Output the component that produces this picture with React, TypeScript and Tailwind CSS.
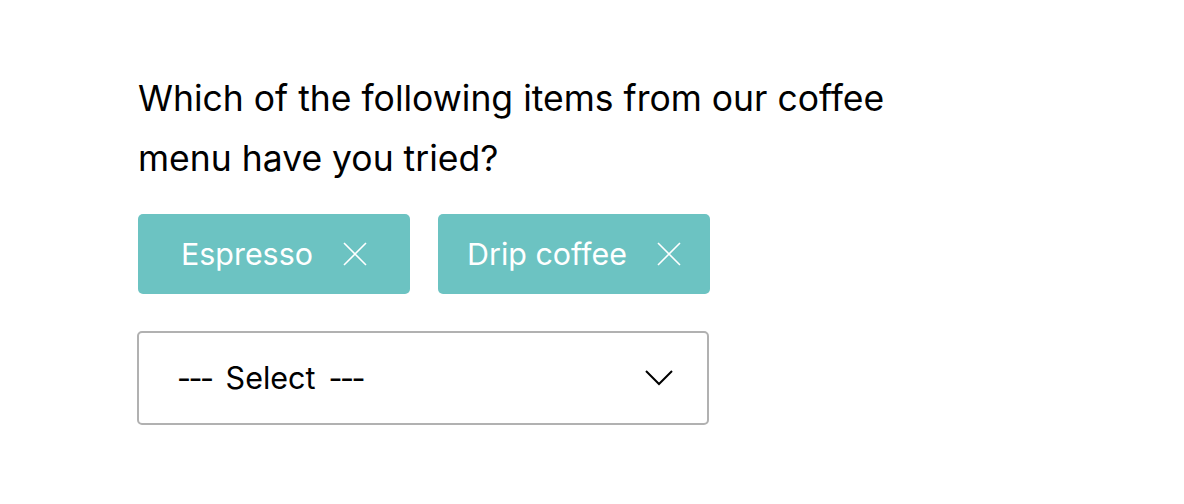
import React, { useState } from 'react';

const items = ['Espresso', 'Drip coffee'];

const CloseIcon: React.FC = () => (
  <svg width="24" height="24" viewBox="0 0 24 24" fill="none" stroke="currentColor" strokeWidth="1.6">
    <path d="M1 1L23 23M23 1L1 23" />
  </svg>
);

const ChevronIcon: React.FC = () => (
  <svg width="28" height="16" viewBox="0 0 28 16" fill="none" stroke="currentColor" strokeWidth="2">
    <path d="M1 1L14 14L27 1" />
  </svg>
);

export default function App() {
  const [selected, setSelected] = useState<string[]>(items);

  return (
    <div className="min-h-[504px] bg-white pl-[138px] pt-[69px] text-black" style={{ fontFamily: 'Inter, sans-serif' }}>
      <h2 className="max-w-[780px] text-[35.5px] font-normal leading-[60px]">
        Which of the following items from our coffee menu have you tried?
      </h2>

      <div className="mt-[25px] flex gap-[28px]">
        {selected.map((item) => (
          <div
            key={item}
            className="flex h-[80px] w-[272px] items-center justify-center gap-[30px] rounded-[5px] bg-[#6cc3c2] text-white"
          >
            <span className="text-[30.4px] leading-none">{item}</span>
            <button
              type="button"
              className="flex items-center justify-center"
              onClick={() => setSelected(selected.filter((s) => s !== item))}
            >
              <CloseIcon />
            </button>
          </div>
        ))}
      </div>

      <div className="-ml-px mt-[37px] flex h-[94px] w-[572px] items-center justify-between rounded-[5px] border-2 border-[#b1b1b1] pl-[38px] pr-[34px]">
        <div className="flex items-center text-[30.5px] leading-none">
          <span className="tracking-[-2.5px]">---</span>
          <span className="ml-[14px]">Select</span>
          <span className="ml-[13px] tracking-[-2.5px]">---</span>
        </div>
        <ChevronIcon />
      </div>
    </div>
  );
}
